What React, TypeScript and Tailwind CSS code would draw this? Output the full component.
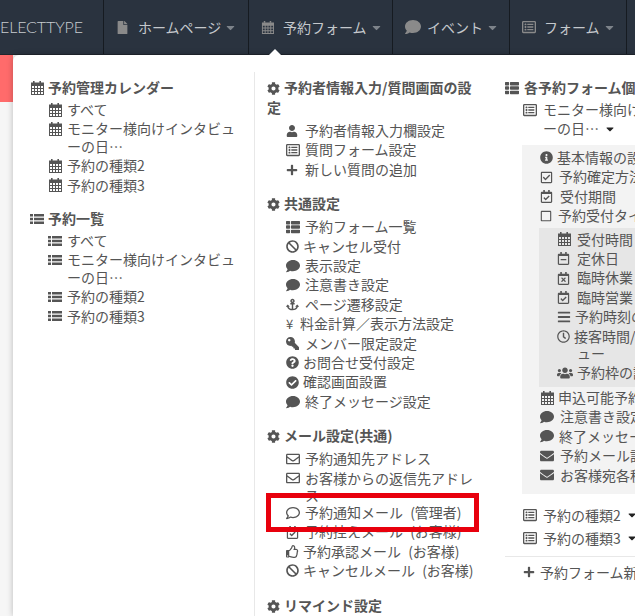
import type { ReactNode } from 'react';
import {
  FaAnchor, FaBan, FaBars, FaCaretDown, FaCheckCircle, FaCog, FaComment, FaEnvelope, FaFile,
  FaInfoCircle, FaKey, FaPlus, FaQuestionCircle, FaRegCalendarCheck, FaRegCalendarMinus,
  FaRegCalendarTimes, FaRegCheckSquare, FaRegClock, FaRegComment, FaRegEnvelope, FaRegListAlt,
  FaRegSquare, FaRegThumbsUp, FaThList, FaUser, FaUsers,
} from 'react-icons/fa';

function Cal({ className = 'text-[14px]' }: { className?: string }) {
  return (
    <svg viewBox="0 0 14 14" width="1em" height="1em" className={className} fill="currentColor">
      <path d="M3 0h1.6v2H3zM9.400 0H11v2H9.400z" />
      <path fillRule="evenodd" d="M1 1.500h13v12.500H1zM2 5v2h2V5zm3 0v2h2V5zm3 0v2h2V5zm3 0v2h2V5zM2 8v2h2V8zm3 0v2h2V8zm3 0v2h2V8zm3 0v2h2V8zM2 11v2h2v-2zm3 0v2h2v-2zm3 0v2h2v-2zm3 0v2h2v-2z" />
    </svg>
  );
}

function ListIcon() {
  return (
    <svg viewBox="0 0 14 14" width="14" height="14" fill="currentColor">
      <path d="M0 2h3v2.400H0zM4 2h10v2.400H4zM0 5.800h3v2.400H0zM4 5.800h10v2.400H4zM0 9.600h3V12H0zM4 9.600h10V12H4z" />
    </svg>
  );
}

function Heading({ icon, gap = 'mr-[4px]', mb = 'mb-[3px]', children }: { icon: ReactNode; gap?: string; mb?: string; children: ReactNode }) {
  return (
    <div className={`font-bold leading-[20px] ${mb}`}>
      <span className={`inline-block align-[-2px] ${gap}`}>{icon}</span>
      {children}
    </div>
  );
}

function Row({ icon, w = 'w-[19px]', children }: { icon: ReactNode; w?: string; children: ReactNode }) {
  return (
    <div className="flex py-px leading-[17.4px]">
      <span className={`flex h-[17.4px] shrink-0 items-center ${w}`}>{icon}</span>
      <span>{children}</span>
    </div>
  );
}

function NavItem({ icon, label, w }: { icon: ReactNode; label: string; w: string }) {
  return (
    <div className={`flex h-full items-center border-r border-[#161b21] pl-[12px] ${w}`}>
      <span className="flex w-[22px] shrink-0 items-center text-[16px] text-[#8a8a8a]">{icon}</span>
      <span className="text-[14px] text-[#c4c8cc]">{label}</span>
      <FaCaretDown className="ml-[3px] text-[13px] text-[#7d838a]" />
    </div>
  );
}

function FormRow({ label }: { label: string }) {
  return (
    <div className="mt-[3.6px] flex items-center leading-[19px]">
      <FaRegListAlt className="mr-[6px] ml-[18px] text-[14px]" />
      {label}
      <FaCaretDown className="ml-[5px] text-[12px] text-[#222]" />
    </div>
  );
}

export default function App() {
  const cal = <Cal />;
  const gear = <FaCog className="text-[13px]" />;
  const list = <ListIcon />;
  const thList = <FaThList className="text-[14px]" />;
  const comment = <FaComment className="text-[14px]" />;
  const mail = <FaRegEnvelope className="text-[14px]" />;
  const mailSolid = <FaEnvelope className="text-[14px]" />;

  return (
    <div className="relative h-[616px] w-[635px] overflow-hidden bg-[#f6f6f6] font-['Noto_Sans_CJK_JP',sans-serif] text-[14px] text-[#555]">
      <div className="flex h-[55px] items-center border-b border-[#20262d] bg-[#2a333f]">
        <div className="flex h-full w-[104px] shrink-0 items-center border-r border-[#161b21] font-['Lato',sans-serif] text-[16px] font-light tracking-[-0.1px] text-[#c8ccd0]">
          ELECTTYPE
        </div>
        <NavItem icon={<FaFile className="text-[13px]" />} label="ホームページ" w="w-[145px]" />
        <NavItem icon={<Cal className="text-[13px]" />} label="予約フォーム" w="w-[144px]" />
        <NavItem icon={<FaComment />} label="イベント" w="w-[117px]" />
        <NavItem icon={<FaRegListAlt className="text-[14px]" />} label="フォーム" w="w-[117px]" />
      </div>

      <div className="flex h-[561px]">
        <div className="flex w-[13px] shrink-0 flex-col">
          <div className="h-[47px] bg-[#ff6b6b]" />
        </div>
        <div className="flex min-w-0 flex-1 overflow-hidden rounded-tl-md bg-white shadow-[0_0_6px_rgba(0,0,0,0.25)]">
          <div className="mt-[17px] w-[242px] shrink-0 border-r border-[#e8e8e8] pt-[5px] pr-[18px] pl-[17px]">
            <Heading icon={cal}>予約管理カレンダー</Heading>
            <div className="pl-[18px]">
              <Row icon={cal}>すべて</Row>
              <Row icon={cal}>モニター様向けインタビューの日…</Row>
              <Row icon={cal}>予約の種類2</Row>
              <Row icon={cal}>予約の種類3</Row>
            </div>
            <div className="mt-[13px]">
              <Heading icon={list} mb="mb-[3px]">予約一覧</Heading>
              <div className="pl-[18px]">
                <Row icon={list}>すべて</Row>
                <Row icon={list}>モニター様向けインタビューの日…</Row>
                <Row icon={list}>予約の種類2</Row>
                <Row icon={list}>予約の種類3</Row>
              </div>
            </div>
          </div>

          <div className="w-[240px] shrink-0 pt-[22px] pr-[20px] pl-[12px]">
            <Heading icon={gear} mb="mb-[4px]">予約者情報入力/質問画面の設定</Heading>
            <div className="pl-[19px]">
              <Row icon={<FaUser className="text-[12px]" />}>予約者情報入力欄設定</Row>
              <Row icon={<FaRegListAlt className="text-[14px]" />}>質問フォーム設定</Row>
              <Row icon={<FaPlus className="text-[12px]" />}>新しい質問の追加</Row>
            </div>
            <div className="mt-[14px]">
              <Heading icon={gear} mb="mb-[4px]">共通設定</Heading>
              <div className="pl-[19px]">
                <Row icon={thList}>予約フォーム一覧</Row>
                <Row w="w-[17px]" icon={<FaBan className="text-[13px]" />}>キャンセル受付</Row>
                <Row icon={comment}>表示設定</Row>
                <Row icon={comment}>注意書き設定</Row>
                <Row icon={<FaAnchor className="text-[13px]" />}>ページ遷移設定</Row>
                <Row w="w-[14px]" icon={<span className="text-[13px]">¥</span>}>料金計算／表示方法設定</Row>
                <Row icon={<FaKey className="-scale-x-100 text-[13px]" />}>メンバー限定設定</Row>
                <Row w="w-[17px]" icon={<FaQuestionCircle className="text-[13px]" />}>お問合せ受付設定</Row>
                <Row w="w-[17px]" icon={<FaCheckCircle className="text-[13px]" />}>確認画面設置</Row>
                <Row icon={comment}>終了メッセージ設定</Row>
              </div>
            </div>
            <div className="mt-[14px]">
              <Heading icon={gear} mb="mb-[4px]">メール設定(共通)</Heading>
              <div className="pl-[19px] [word-spacing:4px]">
                <Row icon={mail}>予約通知先アドレス</Row>
                <Row icon={mail}>お客様からの返信先アドレス</Row>
                <div className="-mt-[2.5px]">
                  <Row icon={<FaRegComment className="text-[14px]" />}>予約通知メール (管理者)</Row>
                </div>
                <Row icon={<FaRegCalendarCheck className="text-[13px]" />}>予約控えメール (お客様)</Row>
                <Row w="w-[17px]" icon={<FaRegThumbsUp className="text-[13px]" />}>予約承認メール (お客様)</Row>
                <Row w="w-[17px]" icon={<FaBan className="text-[13px]" />}>キャンセルメール (お客様)</Row>
              </div>
            </div>
            <div className="mt-[14.5px]">
              <Heading icon={gear}>リマインド設定</Heading>
            </div>
          </div>

          <div className="w-[240px] shrink-0 whitespace-nowrap pt-[22px] pl-[10px]">
            <Heading icon={thList} gap="mr-[5px]">各予約フォーム個別設定</Heading>
            <div className="flex pl-[18px] leading-[19px]">
              <FaRegListAlt className="mt-[3px] mr-[6px] shrink-0 text-[14px]" />
              <div>
                モニター様向けインタビュ
                <div className="flex items-center">
                  ーの日…
                  <FaCaretDown className="ml-[5px] text-[12px] text-[#222]" />
                </div>
              </div>
            </div>

            <div className="mt-[7px] ml-[17px] bg-[#f3f3f3] pt-[3px] pb-[9px]">
              <div className="pl-[18px]">
                <Row w="w-[17px]" icon={<FaInfoCircle className="text-[13px]" />}>基本情報の設定</Row>
                <Row icon={<FaRegCheckSquare className="text-[13px]" />}>予約確定方法の設定</Row>
                <Row w="w-[20px]" icon={<FaRegCalendarCheck className="text-[13px]" />}>受付期間</Row>
                <Row w="w-[18px]" icon={<FaRegSquare className="text-[12px]" />}>予約受付タイプ</Row>
              </div>
              <div className="mt-[2px] ml-[17px] bg-[#e6e6e6] pt-[2px] pb-[4px] pl-[18px]">
                <Row w="w-[20px]" icon={cal}>受付時間</Row>
                <Row w="w-[20px]" icon={<FaRegCalendarMinus className="text-[13px]" />}>定休日</Row>
                <Row w="w-[20px]" icon={<FaRegCalendarTimes className="text-[13px]" />}>臨時休業</Row>
                <Row w="w-[20px]" icon={<FaRegCalendarCheck className="text-[13px]" />}>臨時営業</Row>
                <Row w="w-[18px]" icon={<FaBars className="text-[14px]" />}>予約時刻の設定</Row>
                <Row w="w-[17px]" icon={<FaRegClock className="text-[13px]" />}>
                  接客時間/メニ
                  <br />
                  <span className="ml-[3px]">ュー</span>
                </Row>
                <Row w="w-[20px]" icon={<FaUsers className="text-[16px]" />}>予約枠の設定</Row>
              </div>
              <div className="mt-px pl-[18px]">
                <Row w="w-[18px]" icon={cal}>申込可能予約数</Row>
                <Row w="w-[20px]" icon={comment}>注意書き設定</Row>
                <Row w="w-[19px]" icon={comment}>終了メッセージ設定</Row>
                <Row w="w-[20px]" icon={mailSolid}>予約メール設定</Row>
                <Row w="w-[20px]" icon={mailSolid}>お客様宛各種メール</Row>
              </div>
            </div>

            <div className="mt-[12px]">
              <FormRow label="予約の種類2" />
              <FormRow label="予約の種類3" />
            </div>
            <div className="mt-[8px] border-t border-[#e8e8e8] pt-[6px]">
              <div className="flex items-center pl-[18px] leading-[19px]">
                <FaPlus className="mr-[5px] text-[12px]" />
                予約フォーム新規作成
              </div>
            </div>
          </div>
        </div>
      </div>

      {/* pointer up to the open menu */}
      <div className="absolute top-[49px] left-[269px] h-0 w-0 border-x-[6px] border-b-[6px] border-x-transparent border-b-white" />
      {/* annotation box from the original screenshot */}
      <div className="absolute top-[493px] left-[266px] h-[39px] w-[213px] border-[5px] border-[#e8000d]" />
    </div>
  );
}
